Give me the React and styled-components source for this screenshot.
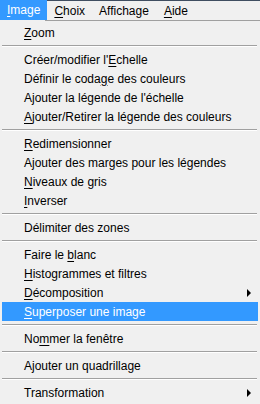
import styled, { createGlobalStyle } from "styled-components";

const GlobalStyle = createGlobalStyle`
  html, body {
    margin: 0;
    padding: 0;
    background: #f0f0f0;
  }
  body {
    font-family: "Liberation Sans", Arial, sans-serif;
    font-size: 12px;
    color: #000;
  }
`;

const Window = styled.div`
  width: 260px;
  height: 404px;
  overflow: hidden;
  background: #f0f0f0;
`;

const MenuBar = styled.div`
  display: flex;
  height: 19px;
  border-top: 1px solid #3f4d60;
`;

const BarItem = styled.div`
  display: flex;
  align-items: center;
  padding: 0 ${(p) => p.pad || 7}px;
  ${(p) =>
    p.active
      ? `background: #3399ff; color: #fff; margin-top: -1px; height: 20px;`
      : `color: #000;`}
`;

const DropEdge = styled.div`
  height: 1px;
  margin-left: 45px;
  background: #a0a0a0;
`;

const Dropdown = styled.div`
  display: flex;
  flex-direction: column;
  padding-top: 2px;
`;

const Item = styled.div`
  display: flex;
  align-items: center;
  height: 19px;
  margin: 0 2px;
  padding-left: 22px;
  white-space: pre;
  ${(p) => (p.active ? `background: #3399ff; color: #fff;` : ``)}
`;

const Text = styled.span`
  white-space: pre;
`;

const Key = styled.span`
  text-decoration: underline;
  text-underline-offset: 2px;
`;

const Arrow = styled.span`
  margin-left: auto;
  margin-right: 7px;
  width: 0;
  height: 0;
  border-left: 4px solid #000;
  border-top: 4px solid transparent;
  border-bottom: 4px solid transparent;
`;

const Separator = styled.div`
  height: 8px;
  margin: 0 3px 0 2px;
  display: flex;
  flex-direction: column;
  justify-content: center;
  &::before {
    content: "";
    display: block;
    border-top: 1px solid #a0a0a0;
    border-bottom: 1px solid #ffffff;
  }
`;

// label with one accelerator letter at index k
const Label = ({ text, k }) => {
  if (k === undefined) return <Text>{text}</Text>;
  return (
    <Text>
      {text.slice(0, k)}
      <Key>{text[k]}</Key>
      {text.slice(k + 1)}
    </Text>
  );
};

const groups = [
  [{ text: "Zoom", k: 0 }],
  [
    { text: "Créer/modifier l'Echelle", k: 17 },
    { text: "Définir le codage des couleurs", k: 15 },
    { text: "Ajouter la légende de l'échelle" },
    { text: "Ajouter/Retirer la légende des couleurs", k: 0 },
  ],
  [
    { text: "Redimensionner", k: 0 },
    { text: "Ajouter des marges pour les légendes" },
    { text: "Niveaux de gris", k: 0 },
    { text: "Inverser", k: 0 },
  ],
  [{ text: "Délimiter des zones" }],
  [
    { text: "Faire le blanc", k: 9 },
    { text: "Histogrammes et filtres", k: 0 },
    { text: "Décomposition", k: 0, sub: true },
    { text: "Superposer une image", k: 0, active: true },
  ],
  [{ text: "Nommer la fenêtre", k: 2 }],
  [{ text: "Ajouter un quadrillage" }],
  [{ text: "Transformation", sub: true }],
];

const App = () => {
  return (
    <Window>
      <GlobalStyle />
      <MenuBar>
        <BarItem active>
          <Label text="Image" k={0} />
        </BarItem>
        <BarItem>
          <Label text="Choix" k={0} />
        </BarItem>
        <BarItem>
          <Label text="Affichage" />
        </BarItem>
        <BarItem pad={8}>
          <Label text="Aide" k={0} />
        </BarItem>
      </MenuBar>
      <DropEdge />
      <Dropdown>
        {groups.map((group, gi) => (
          <div key={gi}>
            {gi > 0 && <Separator />}
            {group.map((it) => (
              <Item key={it.text} active={it.active}>
                <Label text={it.text} k={it.k} />
                {it.sub && <Arrow />}
              </Item>
            ))}
          </div>
        ))}
      </Dropdown>
    </Window>
  );
};

export default App;
